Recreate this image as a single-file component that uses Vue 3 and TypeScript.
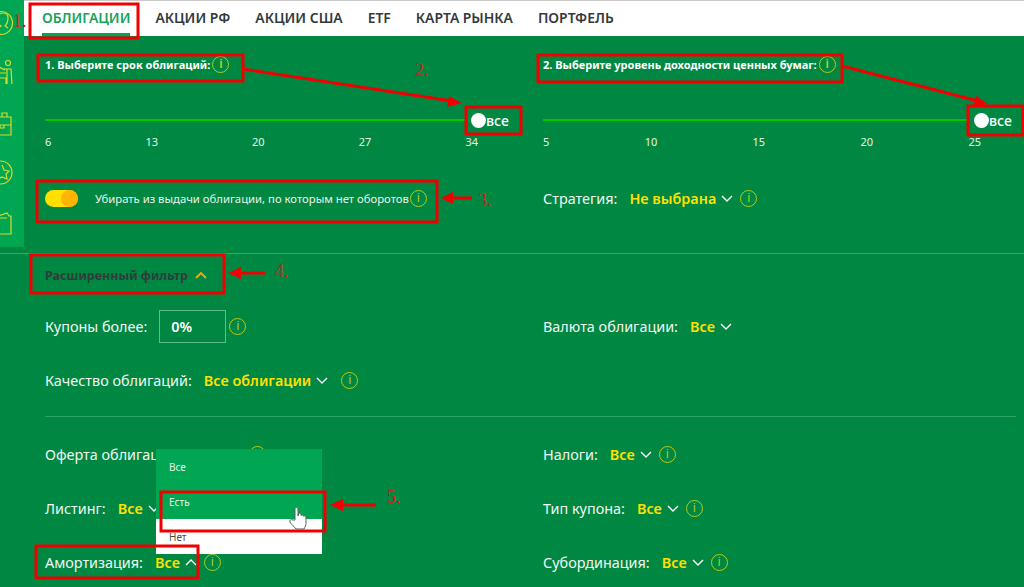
<script setup lang="ts">
const tabs = ['ОБЛИГАЦИИ', 'АКЦИИ РФ', 'АКЦИИ США', 'ETF', 'КАРТА РЫНКА', 'ПОРТФЕЛЬ']
const termMarks = [6, 13, 20, 27, 34]
const yieldMarks = [5, 10, 15, 20, 25]
const leftLower = [
  { label: 'Оферта облигаций:', value: 'Все', up: false, cls: 'offer' },
  { label: 'Листинг:', value: 'Все', up: false, cls: '' },
  { label: 'Амортизация:', value: 'Все', up: true, cls: '' },
]
const rightLower = [
  { label: 'Налоги:', value: 'Все' },
  { label: 'Тип купона:', value: 'Все' },
  { label: 'Субординация:', value: 'Все' },
]
const boxes = [
  [30, 4, 108, 34], [38, 55, 205, 26], [466, 107, 55, 27], [538, 55, 304, 27], [968, 106, 55, 29],
  [37, 181, 400, 41], [31, 255, 193, 38], [161, 492, 164, 39], [36, 546, 162, 32],
]
const arrows = [
  { d: 'M243 69 L452 101', h: '462,103 447,107 449,96' },
  { d: 'M842 66 L978 101', h: '988,104 973,107 976,96' },
  { d: 'M472 198 L450 198', h: '441,198 453,192 453,204' },
  { d: 'M265 273 L238 273', h: '228,273 241,267 241,279' },
  { d: 'M376 505 L342 505', h: '330,505 343,499 343,511' },
]
const notes = [
  { t: '1.', x: 13, y: 27 }, { t: '2.', x: 415, y: 76 }, { t: '3.', x: 478, y: 206 },
  { t: '4.', x: 275, y: 277 }, { t: '5.', x: 387, y: 503 },
]
</script>

<template>
  <div class="page">
    <aside class="rail">
      <svg width="24" height="247" viewBox="0 0 24 247" fill="none" stroke="#d6dc2e" stroke-width="1.2">
        <circle cx="1" cy="23" r="11.5" />
        <path d="M-3 33c0-4 2-6 4-7-3-2-4-5-4-8 0-3 3-5 6-5s5 2 5 5c0 3-1 6-3 8l3 2" />
        <circle cx="8" cy="63" r="2.5" />
        <path d="M4 69h7l1 15M7 69v15M-1 67l6 3M-1 73h7M0 78h6v6" />
        <path d="M-2 117h13v18H-2zM-2 125h13M0 125v3h4v-3M2 117v-4h5v4" />
        <circle cx="0.5" cy="172.500" r="11.500" />
        <path d="M2 165l2 5 5 1-3 3 1 5-5-2-4 2 1-5-3-3" />
        <path d="M-2 216l9-3 2 3h2v18H-2zM7 218H-2" />
      </svg>
    </aside>

    <nav class="tabs">
      <a v-for="(tab, i) in tabs" :key="tab" class="tab" :class="{ active: i === 0 }">{{ tab }}</a>
    </nav>

    <section class="top">
      <div class="col">
        <h3 class="title">1. Выберите срок облигаций: <i class="info small">i</i></h3>
        <div class="slider">
          <div class="track"></div>
          <span class="knob"></span><span class="all">все</span>
        </div>
        <div class="marks"><span v-for="m in termMarks" :key="m">{{ m }}</span></div>
      </div>
      <div class="col">
        <h3 class="title">2. Выберите уровень доходности ценных бумаг: <i class="info small">i</i></h3>
        <div class="slider">
          <div class="track"></div>
          <span class="knob"></span><span class="all">все</span>
        </div>
        <div class="marks wide"><span v-for="m in yieldMarks" :key="m">{{ m }}</span></div>
      </div>
    </section>

    <section class="options">
      <div class="row switch-row">
        <span class="switch"><span class="switch-dot"></span></span>
        <span class="switch-text">Убирать из выдачи облигации, по которым нет оборотов</span>
        <i class="info tight">i</i>
      </div>
      <div class="row">
        <span class="label">Стратегия:</span><b class="value">Не выбрана</b>
        <svg class="chev" width="12" height="7" viewBox="0 0 12 7"><path d="M1 1l5 5 5-5" /></svg>
        <i class="info">i</i>
      </div>
    </section>

    <div class="extended">
      <strong>Расширенный фильтр</strong>
      <svg class="chev orange" width="12" height="7" viewBox="0 0 12 7"><path d="M1 6l5-5 5 5" /></svg>
    </div>

    <section class="filters">
      <div class="col">
        <div class="row frow">
          <span class="label">Купоны более:</span>
          <span class="input">0%</span>
          <i class="info near">i</i>
        </div>
        <div class="row frow">
          <span class="label">Качество облигаций:</span><b class="value">Все облигации</b>
          <svg class="chev" width="12" height="7" viewBox="0 0 12 7"><path d="M1 1l5 5 5-5" /></svg>
          <i class="info wide-gap">i</i>
        </div>
      </div>
      <div class="col">
        <div class="row frow">
          <span class="label">Валюта облигации:</span><b class="value">Все</b>
          <svg class="chev" width="12" height="7" viewBox="0 0 12 7"><path d="M1 1l5 5 5-5" /></svg>
        </div>
      </div>
    </section>

    <hr class="rule" />

    <section class="filters lower">
      <div class="col">
        <div v-for="f in leftLower" :key="f.label" class="row frow" :class="f.cls">
          <span class="label">{{ f.label }}</span><b class="value">{{ f.value }}</b>
          <svg class="chev" width="12" height="7" viewBox="0 0 12 7">
            <path :d="f.up ? 'M1 6l5-5 5 5' : 'M1 1l5 5 5-5'" />
          </svg>
          <i class="info">i</i>
        </div>
      </div>
      <div class="col">
        <div v-for="f in rightLower" :key="f.label" class="row frow">
          <span class="label">{{ f.label }}</span><b class="value">{{ f.value }}</b>
          <svg class="chev" width="12" height="7" viewBox="0 0 12 7"><path d="M1 1l5 5 5-5" /></svg>
          <i class="info">i</i>
        </div>
      </div>
    </section>

    <ul class="menu">
      <li>Все</li>
      <li>Есть</li>
      <li class="plain">Нет</li>
    </ul>

    <svg class="marks-layer" width="1024" height="587" viewBox="0 0 1024 587">
      <g fill="none" stroke="#f00000" stroke-width="3">
        <rect v-for="b in boxes" :key="b.join()" :x="b[0]" :y="b[1]" :width="b[2]" :height="b[3]" />
        <path v-for="a in arrows" :key="a.d" :d="a.d" />
      </g>
      <polygon v-for="a in arrows" :key="a.h" :points="a.h" fill="#f00000" />
      <text v-for="n in notes" :key="n.t" :x="n.x" :y="n.y" class="note">{{ n.t }}</text>
      <path class="hand" d="M295 520v-11c0-2 3-2 3 0v7l.5-2c.5-1.500 2.500-1 2.500.5v1c.5-1 2.500-.8 2.500.7.500-.7 2.500-.5 2.500 1v6c0 2-1 4-2 5.800h-8c-1-2-5-4.500-6-7-.8-2 1-3 3-2z" />
    </svg>
  </div>
</template>

<style>
html, body { margin: 0; background: #008843; }
</style>

<style scoped>
.page {
  position: relative;
  width: 1024px;
  height: 587px;
  overflow: hidden;
  background: #008843;
  color: #f2f7f2;
  font-family: "Noto Sans", sans-serif;
  font-size: 14.4px;
}
.rail {
  position: absolute;
  left: 0;
  top: 0;
  width: 24px;
  height: 247px;
  background: #00a651;
}
.rail svg { display: block; overflow: hidden; }
.tabs {
  display: flex;
  gap: 25px;
  height: 35px;
  margin-left: 24px;
  padding-left: 18px;
  background: #fff;
  border-top: 1px solid #c9c9c9;
}
.tab {
  height: 35px;
  line-height: 33px;
  box-sizing: border-box;
  font-size: 13.9px;
  font-weight: 600;
  color: #333a3d;
}
.tab.active { color: #18a35c; border-bottom: 3px solid #00a651; }
.top, .filters, .options {
  display: grid;
  grid-template-columns: 498px 481px;
  padding-left: 45px;
}
.top { height: 142px; align-content: start; }
.title {
  display: flex;
  align-items: center;
  gap: 2px;
  height: 24px;
  margin: 16px 0 0;
  font-size: 11px;
  font-weight: 700;
  color: #fff;
}
.slider {
  position: relative;
  display: flex;
  align-items: center;
  height: 24px;
  margin-top: 32px;
}
.track { width: 421px; height: 2px; background: #00c800; }
.col:last-child .track { width: 426px; }
.knob {
  width: 15px;
  height: 15px;
  margin-left: 5px;
  border-radius: 50%;
  background: #fff;
}
.all { font-size: 14px; font-weight: 500; color: #fff; }
.marks {
  display: flex;
  justify-content: space-between;
  width: 433px;
  margin-top: 2px;
  font-size: 11px;
  color: #e8f5ec;
}
.marks.wide { width: 438px; }
.options {
  align-items: start;
  height: 76px;
  padding-top: 8px;
  box-sizing: border-box;
  border-bottom: 1px solid #3aa56d;
}
.row { display: flex; align-items: center; height: 24px; }
.switch {
  display: flex;
  justify-content: flex-end;
  width: 33px;
  height: 17px;
  border-radius: 9px;
  background: #ffe000;
}
.switch-dot { width: 17px; height: 17px; border-radius: 50%; background: #ffb400; }
.switch-text { margin-left: 17px; font-size: 11.3px; color: #e9f4ec; }
.label { margin-right: 12px; }
.value { color: #ffe000; font-weight: 600; }
.chev { flex: none; margin-left: 5px; fill: none; stroke: #fff; stroke-width: 1.4; }
.chev.orange { margin-left: 7px; stroke: #f0a818; stroke-width: 1.8; }
.info {
  display: inline-flex;
  align-items: center;
  justify-content: center;
  flex: none;
  width: 15px;
  height: 15px;
  margin-left: 7px;
  border: 1px solid #b5cc1c;
  border-radius: 50%;
  font-family: "Liberation Sans", sans-serif;
  font-size: 12px;
  font-style: normal;
  color: #b5cc1c;
}
.info.small { margin-left: 0; }
.info.tight { margin-left: 1px; }
.info.near { margin-left: 3px; }
.info.wide-gap { margin-left: 13px; }
.offer .info { margin-left: 14px; }
.extended {
  display: flex;
  align-items: center;
  height: 42px;
  padding-left: 45px;
  font-size: 12.5px;
  color: #2f3d3a;
}
.extended strong { font-weight: 700; }
.filters { padding-top: 18px; height: 120px; box-sizing: border-box; }
.frow { margin-bottom: 30px; }
.input {
  display: flex;
  align-items: center;
  flex: none;
  width: 67px;
  height: 33px;
  padding-left: 11px;
  box-sizing: border-box;
  border: 1px solid #5fbb8b;
  font-weight: 600;
  color: #fff;
}
.rule {
  height: 1px;
  margin: 0 8px 0 45px;
  border: 0;
  background: #2fa267;
}
.lower { padding-top: 25px; height: 170px; }
.menu {
  position: absolute;
  left: 156px;
  top: 449px;
  width: 166px;
  height: 105px;
  margin: 0;
  padding: 0;
  list-style: none;
  font-size: 10px;
  background: #00a651;
  color: #e9f4ec;
}
.menu li { height: 35px; line-height: 36px; padding-left: 13px; }
.menu .plain { background: #fff; color: #4a4a4a; }
.marks-layer { position: absolute; left: 0; top: 0; pointer-events: none; }
.note { font-family: "Liberation Serif", serif; font-size: 18px; fill: #d42020; }
.hand { fill: #fff; stroke: #55605a; stroke-width: 1; }
</style>
